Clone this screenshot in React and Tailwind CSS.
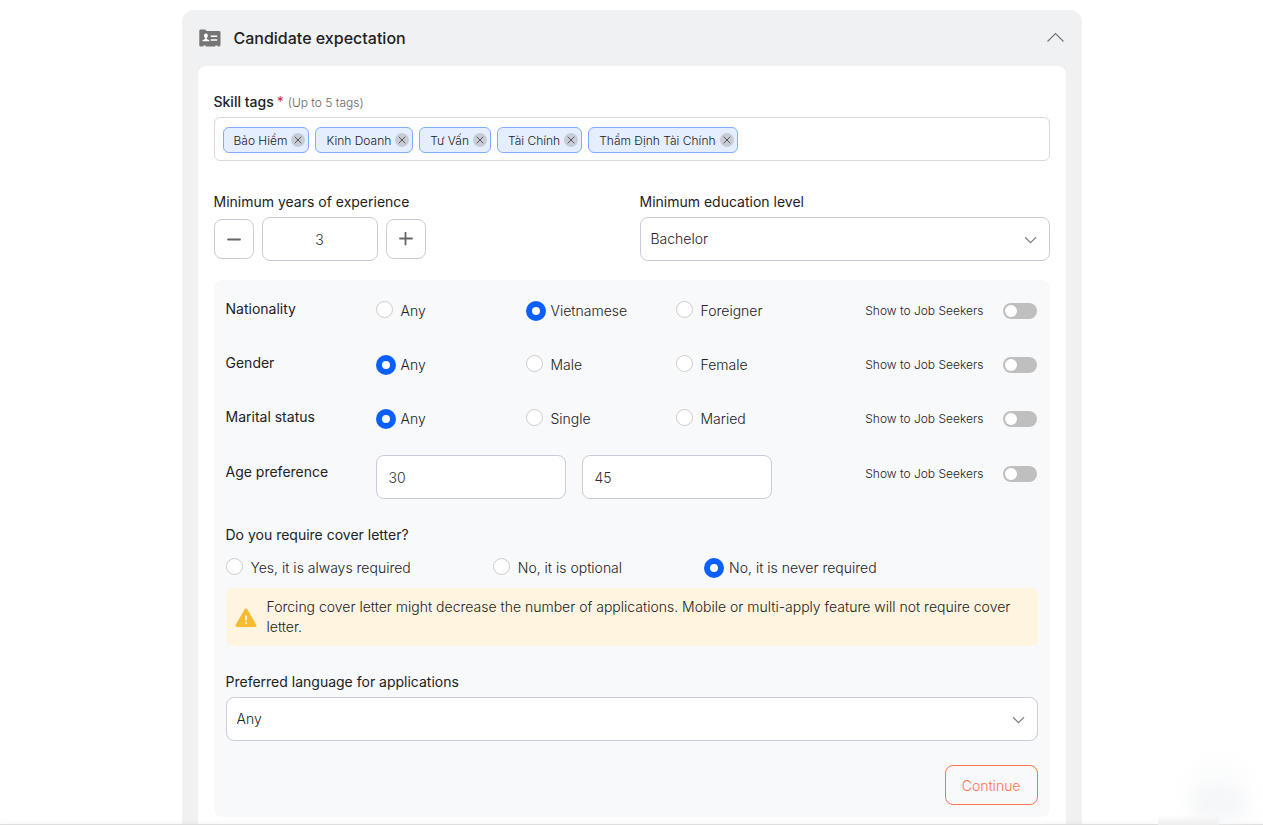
import { useState } from "react";

const TAGS = ["Bảo Hiểm", "Kinh Doanh", "Tư Vấn", "Tài Chính", "Thẩm Định Tài Chính"];

const PREFERENCES = [
  { id: "nationality", label: "Nationality", options: ["Any", "Vietnamese", "Foreigner"], initial: "Vietnamese" },
  { id: "gender", label: "Gender", options: ["Any", "Male", "Female"], initial: "Any" },
  { id: "marital", label: "Marital status", options: ["Any", "Single", "Maried"], initial: "Any" },
];

const COVER_OPTIONS = ["Yes, it is always required", "No, it is optional", "No, it is never required"];

function FolderCardIcon() {
  return (
    <svg width="24" height="18" viewBox="-1 0 24 18" aria-hidden="true">
      <path
        d="M1.6 0.4h4.500l1.500 1.500h12.300c1 0 1.600.6 1.600 1.500v12.400c0 1-.6 1.600-1.600 1.600h-1.200v-.9h-2.400v.9H6.700v-.9H4.300v.9H1.600c-.8 0-1.300-.6-1.300-1.400V1.800C.3 1 .8.4 1.600.4z"
        fill="#757575"
      />
      <path
        d="M6.900 4.600c1.200 0 1.900.9 1.900 2.100 0 .9-.4 1.700-1 2.100v1.100l2.100 1c.4.2.5.5.5 1.300H3.400c0-.8.1-1.100.5-1.300l2.100-1V8.800c-.6-.4-1-1.200-1-2.100 0-1.200.7-2.100 1.900-2.100z"
        fill="#fff"
      />
      <path d="M11.800 7.200h6.400M11.800 11h6.400" stroke="#fff" strokeWidth="1.400" />
    </svg>
  );
}

function ChevronDown() {
  return (
    <svg
      className="pointer-events-none absolute top-[19px] right-[13px]"
      width="12"
      height="8"
      viewBox="0 0 12 8"
      fill="none"
      aria-hidden="true"
    >
      <path d="M0 1.200L5.500 6.700L11 1.200" stroke="#7a7a7a" strokeWidth="1.200" />
    </svg>
  );
}

function SelectBox({ id, options }) {
  return (
    <div className="relative">
      <select
        id={id}
        className="block h-11 w-full appearance-none rounded-lg border border-[#c9ccd8] bg-white pr-10 pl-[10px] text-sm font-light text-[#222]"
      >
        {options.map((o) => (
          <option key={o}>{o}</option>
        ))}
      </select>
      <ChevronDown />
    </div>
  );
}

function Radio({ name, label, checked, onChange }) {
  return (
    <label className="flex h-5 cursor-pointer items-start text-sm leading-5 font-light whitespace-nowrap text-[#222]">
      <span className="flex w-[25px] shrink-0">
        <input
          type="radio"
          name={name}
          checked={checked}
          onChange={onChange}
          className="m-0 h-[17px] w-[17px] appearance-none rounded-full border border-[#ccc] bg-white checked:h-5 checked:w-5 checked:border-[6px] checked:border-[#0b5fff]"
        />
      </span>
      {label}
    </label>
  );
}

function VisibilityToggle({ id }) {
  return (
    <label
      htmlFor={id}
      className="mr-px flex h-5 cursor-pointer items-center gap-[19px] text-xs font-light text-[#222]"
    >
      Show to Job Seekers
      <input
        id={id}
        type="checkbox"
        role="switch"
        className="m-0 flex h-4 w-[34px] shrink-0 appearance-none items-center rounded-full bg-[#bfbfbf] px-[2px] before:block before:h-3 before:w-3 before:rounded-full before:bg-white checked:justify-end checked:bg-[#0b5fff]"
      />
    </label>
  );
}

function PreferenceRow({ id, label, options, initial }) {
  const [value, setValue] = useState(initial);
  return (
    <div role="radiogroup" aria-label={label} className="flex h-5 items-start">
      <span className="w-[150px] shrink-0 text-sm leading-4">{label}</span>
      {options.map((o) => (
        <div key={o} className="w-[150px] shrink-0">
          <Radio name={id} label={o} checked={value === o} onChange={() => setValue(o)} />
        </div>
      ))}
      <div className="ml-auto">
        <VisibilityToggle id={id + "-visible"} />
      </div>
    </div>
  );
}

export default function App() {
  const [tags, setTags] = useState(TAGS);
  const [years, setYears] = useState(3);
  const [cover, setCover] = useState(COVER_OPTIONS[2]);

  return (
    <div className="flex h-screen flex-col bg-white font-['Inter','Liberation_Sans',sans-serif] text-[#222]">
      <main className="min-h-0 flex-1 overflow-y-auto px-4 pt-[10px] [scrollbar-width:none]">
        <section className="mx-auto max-w-[900px] rounded-xl bg-[#f0f1f3] px-4 pb-4">
          <header className="flex h-14 items-center">
            <FolderCardIcon />
            <h1 className="ml-3 text-base font-medium">Candidate expectation</h1>
            <button type="button" aria-label="Collapse section" className="ml-auto">
              <svg width="20" height="12" viewBox="0 0 20 12" fill="none" aria-hidden="true">
                <path d="M1.500 9.500L9.500 1.500L17.500 9.500" stroke="#757575" strokeWidth="1.200" />
              </svg>
            </button>
          </header>

          <div className="rounded-lg bg-white px-4 pt-7 pb-4">
            <div className="flex items-baseline text-sm leading-4">
              <span className="font-medium">Skill tags</span>
              <span className="ml-[3px] text-[#d0303a]">*</span>
              <span className="ml-1 text-xs leading-4 font-light text-[#666]">(Up to 5 tags)</span>
            </div>
            <ul className="mt-[6px] flex min-h-11 flex-wrap items-center gap-[6px] rounded-md border border-[#d9d9d9] px-2 pt-[6px] pb-1">
              {tags.map((tag) => (
                <li
                  key={tag}
                  className="flex h-[26px] items-center gap-1 rounded-md border border-[#7fadff] bg-[#e5eeff] pr-[3px] pl-[10px] text-xs leading-4 font-light text-[#222]"
                >
                  <span className="pt-[2px]">{tag}</span>
                  <button
                    type="button"
                    aria-label={"Remove " + tag}
                    onClick={() => setTags(tags.filter((t) => t !== tag))}
                    className="flex h-[14px] w-[14px] items-center justify-center rounded-full bg-[#c8ccd6]"
                  >
                    <svg width="8" height="8" viewBox="0 0 8 8" aria-hidden="true">
                      <path d="M0.700 0.700L7.300 7.300M7.300 0.700L0.700 7.300" stroke="#555" strokeWidth="1" />
                    </svg>
                  </button>
                </li>
              ))}
            </ul>

            <div className="mt-[33px] grid grid-cols-2 gap-4">
              <div>
                <label htmlFor="years" className="block text-sm leading-4">
                  Minimum years of experience
                </label>
                <div className="mt-[7px] flex items-center gap-2">
                  <button
                    type="button"
                    aria-label="Decrease"
                    onClick={() => setYears(Math.max(0, years - 1))}
                    className="flex h-10 w-10 items-center justify-center rounded-lg border border-[#c9ccd8] bg-white"
                  >
                    <svg width="14" height="14" viewBox="0 0 14 14" aria-hidden="true">
                      <path d="M1 7.500H13" stroke="#666" strokeWidth="1.800" strokeLinecap="round" />
                    </svg>
                  </button>
                  <input
                    id="years"
                    type="text"
                    inputMode="numeric"
                    value={years}
                    onChange={(e) => setYears(Number(e.target.value) || 0)}
                    className="h-11 w-[116px] rounded-lg border border-[#c9ccd8] bg-white text-center text-sm font-light text-[#333]"
                  />
                  <button
                    type="button"
                    aria-label="Increase"
                    onClick={() => setYears(years + 1)}
                    className="flex h-10 w-10 items-center justify-center rounded-lg border border-[#c9ccd8] bg-white"
                  >
                    <svg width="14" height="14" viewBox="0 0 14 14" aria-hidden="true">
                      <path d="M1 6.500H13M6.500 0.700V12.500" stroke="#666" strokeWidth="1.800" strokeLinecap="round" />
                    </svg>
                  </button>
                </div>
              </div>
              <div>
                <label htmlFor="education" className="mb-[7px] block text-sm leading-4">
                  Minimum education level
                </label>
                <SelectBox id="education" options={["Bachelor", "Master", "Doctorate"]} />
              </div>
            </div>

            <div className="mt-[19px] rounded-lg bg-[#f8f9fb] px-3 pt-[21px] pb-3">
              <div className="flex flex-col gap-[34px]">
                {PREFERENCES.map((p) => (
                  <PreferenceRow key={p.id} {...p} />
                ))}
              </div>

              <div className="mt-[26px] flex items-start">
                <span className="w-[150px] shrink-0 pt-[9px] text-sm leading-4">Age preference</span>
                <div className="flex gap-4">
                  <input
                    type="text"
                    aria-label="Minimum age"
                    defaultValue="30"
                    className="h-11 w-[190px] rounded-lg border border-[#c9ccd8] bg-white px-3 text-sm font-light text-[#333]"
                  />
                  <input
                    type="text"
                    aria-label="Maximum age"
                    defaultValue="45"
                    className="h-11 w-[190px] rounded-lg border border-[#c9ccd8] bg-white px-3 text-sm font-light text-[#333]"
                  />
                </div>
                <div className="ml-auto pt-[9px]">
                  <VisibilityToggle id="age-visible" />
                </div>
              </div>

              <fieldset className="mt-7">
                <legend className="text-sm leading-4">Do you require cover letter?</legend>
                <div className="mt-[15px] flex flex-wrap gap-x-[82px] gap-y-2">
                  {COVER_OPTIONS.map((o) => (
                    <Radio key={o} name="cover" label={o} checked={cover === o} onChange={() => setCover(o)} />
                  ))}
                </div>
              </fieldset>

              <div className="mt-[10px] flex items-center rounded-md bg-[#fef4df] px-[9px] py-[9px]">
                <svg className="shrink-0" width="22" height="22" viewBox="0 -2 22 22" aria-hidden="true">
                  <path
                    d="M9.500 1.400c.6-1.100 2.200-1.100 2.900 0l8.800 15.300c.6 1.100-.1 2.300-1.300 2.300H2c-1.200 0-2-1.200-1.300-2.300z"
                    fill="#f7bb2f"
                  />
                  <path d="M10.200 7.500h1.600v5h-1.600zM10.200 14.300h1.600v1.700h-1.600z" fill="#fff" />
                </svg>
                <p className="ml-[10px] text-sm leading-5 font-light text-[#222]">
                  Forcing cover letter might decrease the number of applications. Mobile or multi-apply feature will
                  not require cover letter.
                </p>
              </div>

              <label htmlFor="language" className="mt-7 mb-[7px] block text-sm leading-4">
                Preferred language for applications
              </label>
              <SelectBox id="language" options={["Any", "Vietnamese", "English"]} />

              <div className="mt-6 flex justify-end">
                <button
                  type="button"
                  className="h-10 rounded-lg border border-[#ff7350] px-4 pt-px text-sm font-light text-[#ff7350]"
                >
                  Continue
                </button>
              </div>
            </div>
          </div>
        </section>
      </main>
      <footer className="relative h-px shrink-0 bg-[#dedede] shadow-[0_-1px_4px_rgba(0,0,0,0.12)]">
        <div className="pointer-events-none absolute right-[9px] bottom-0 h-[76px] w-[72px] bg-[radial-gradient(closest-side_at_50%_70%,#f6f7f9_0%,#f9fafb_50%,transparent_100%)]" />
        <div className="pointer-events-none absolute right-4 bottom-0 h-[60px] w-[56px] rounded-t-3xl bg-[#f3f5f7] opacity-50 blur-md" />
        <div className="pointer-events-none absolute right-[44px] bottom-0 h-[10px] w-[61px] bg-linear-to-b from-transparent to-[#eeeeee]" />
      </footer>
    </div>
  );
}
